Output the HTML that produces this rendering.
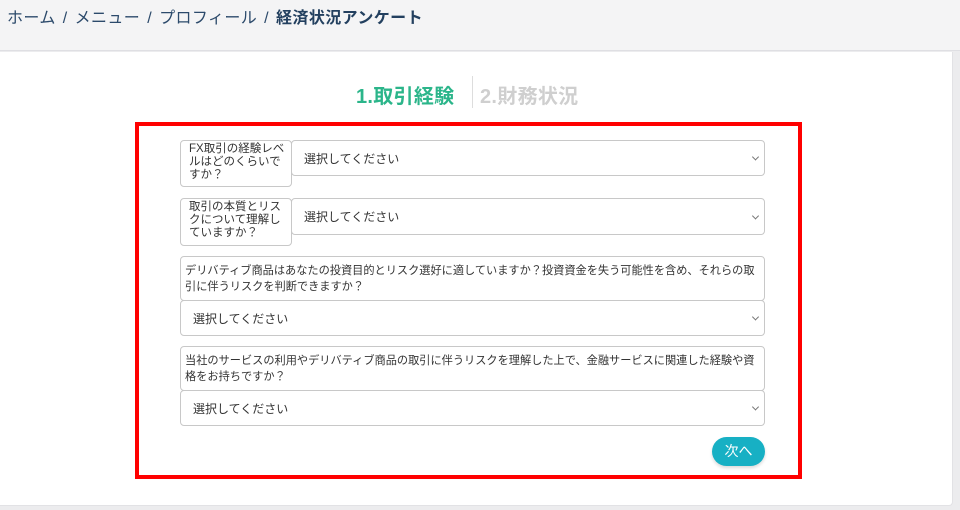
<!DOCTYPE html>
<html><head><meta charset="utf-8"><style>
*{box-sizing:border-box;margin:0;padding:0}
body{width:960px;height:510px;background:#ececee;font-family:"Liberation Sans","Noto Sans CJK JP",sans-serif;position:relative;overflow:hidden}
.hdr{position:absolute;left:0;top:0;width:960px;height:51px;background:#f4f4f5;border-bottom:1px solid #dfdfe3}
.bc{position:absolute;left:7px;top:4px;font-size:16px;color:#2c4a6b;letter-spacing:0.4px}
.bc i{font-style:normal;margin:0 7px}
.bc b{font-weight:bold;color:#23405f}
.card{position:absolute;left:0;top:52px;width:953px;height:454px;background:#fff;border-right:1px solid #e2e2e5;border-bottom:1px solid #e2e2e5;border-radius:0 0 4px 0}
.s1{position:absolute;left:356px;top:80px;font-size:20px;font-weight:bold;color:#2bb58a;letter-spacing:0.3px}
.s2{position:absolute;left:480px;top:80px;font-size:20px;font-weight:bold;color:#cfcfcf;letter-spacing:0.3px}
.div{position:absolute;left:472px;top:76px;width:1px;height:32px;background:#ddd}
.red{position:absolute;left:135px;top:122px;width:667px;height:357px;border:4px solid #f00}
.lb{position:absolute;border:1px solid #c8c8c8;border-radius:4px;font-size:11.5px;line-height:13px;color:#333;padding:2px 6px;background:#fff}
.sel{position:absolute;border:1px solid #c8c8c8;border-radius:4px;background:#fff;font-size:12px;color:#333;padding-left:12px;display:flex;align-items:center}
.sel:after{content:"";position:absolute;right:6px;top:50%;width:4px;height:4px;border-right:1px solid #777;border-bottom:1px solid #777;transform:translateY(-70%) rotate(45deg)}
.btn{position:absolute;left:712px;top:437px;width:53px;height:29px;border-radius:15px;background:#17b0c4;color:#fff;font-size:14px;text-align:center;line-height:29px;box-shadow:0 2px 3px rgba(0,0,0,.15)}
</style></head><body>
<div class="hdr"><div class="bc">ホーム<i>/</i>メニュー<i>/</i>プロフィール<i>/</i><b>経済状況アンケート</b></div></div>
<div class="card"></div>
<div class="s1">1.取引経験</div><div class="div"></div><div class="s2">2.財務状況</div>
<div class="red"></div>
<div class="lb" style="left:180px;top:140px;width:112px;height:47px;padding:2px 2px 2px 8px">FX取引の経験レベルはどのくらいですか？</div>
<div class="sel" style="left:291px;top:140px;width:474px;height:36px">選択してください</div>
<div class="lb" style="left:180px;top:198px;width:112px;height:48px;padding:2px 2px 2px 8px">取引の本質とリスクについて理解していますか？</div>
<div class="sel" style="left:291px;top:198px;width:474px;height:37px">選択してください</div>
<div class="lb" style="left:180px;top:256px;width:585px;height:45px;padding:6px 4px;line-height:16px;font-size:11.2px">デリバティブ商品はあなたの投資目的とリスク選好に適していますか？投資資金を失う可能性を含め、それらの取引に伴うリスクを判断できますか？</div>
<div class="sel" style="left:180px;top:300px;width:585px;height:36px">選択してください</div>
<div class="lb" style="left:180px;top:346px;width:585px;height:45px;padding:6px 4px;line-height:16px;font-size:11.2px">当社のサービスの利用やデリバティブ商品の取引に伴うリスクを理解した上で、金融サービスに関連した経験や資格をお持ちですか？</div>
<div class="sel" style="left:180px;top:390px;width:585px;height:36px">選択してください</div>
<div class="btn">次へ</div>
</body></html>
